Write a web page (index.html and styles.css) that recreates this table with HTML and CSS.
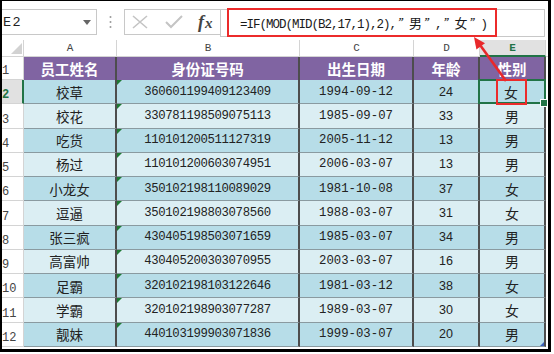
FILE: index.html
```html
<!DOCTYPE html>
<html lang="zh">
<head>
<meta charset="utf-8">
<link rel="stylesheet" href="styles.css">
</head>
<body>
<div class="frame">
  <div class="fbar">
    <div class="namebox"><span class="nm">E2</span><svg class="dd" width="8" height="5" viewBox="0 0 8 5"><path d="M0 0H8L4 5Z" fill="#666"/></svg></div>
    <div class="dots"><svg width="3" height="14" viewBox="0 0 3 14"><circle cx="1.5" cy="2" r="1" fill="#999"/><circle cx="1.5" cy="7" r="1" fill="#999"/><circle cx="1.5" cy="12" r="1" fill="#999"/></svg></div>
    <div class="btns">
      <svg class="xbtn" width="16" height="14" viewBox="0 0 16 14"><path d="M1 1L15 13M15 1L1 13" stroke="#c4c4c4" stroke-width="1.6" fill="none"/></svg>
      <svg class="ckbtn" width="18" height="14" viewBox="0 0 18 14"><path d="M1 7L6 12L17 1" stroke="#c4c4c4" stroke-width="2" fill="none"/></svg>
      <span class="fx"><i>f</i><i class="x">x</i></span>
    </div>
    <div class="input">
      <div class="redf"><span class="ftext">=IF(MOD(MID(B2,17,1),2),<span class="q">”</span><span class="cj">男</span><span class="q">”</span>,<span class="q">”</span><span class="cj">女</span><span class="q">”</span>)</span></div>
    </div>
  </div>
  <div class="sheet">
    <div class="corner"><svg width="11" height="11" viewBox="0 0 11 11"><path d="M11 0V11H0Z" fill="#d2d2d2"/></svg></div>
    <div class="ch">A</div><div class="ch">B</div><div class="ch">C</div><div class="ch">D</div><div class="ch selc">E</div><div class="ch f"></div>

    <div class="rh">1</div>
    <div class="c h">员工姓名</div><div class="c h">身份证号码</div><div class="c h">出生日期</div><div class="c h">年龄</div><div class="c h">性别</div><div class="c f"></div>

    <div class="rh selr">2</div>
    <div class="c d nm2">校草</div><div class="c d id">360601199409123409</div><div class="c d dt">1994-09-12</div><div class="c d ag">24</div><div class="c d sx sel"><span class="redbox">女</span></div><div class="c f"></div>

    <div class="rh">3</div>
    <div class="c l nm2">校花</div><div class="c l id">330781198509075113</div><div class="c l dt">1985-09-07</div><div class="c l ag">33</div><div class="c l sx">男</div><div class="c f"></div>

    <div class="rh">4</div>
    <div class="c d nm2">吃货</div><div class="c d id">110101200511127319</div><div class="c d dt">2005-11-12</div><div class="c d ag">13</div><div class="c d sx">男</div><div class="c f"></div>

    <div class="rh">5</div>
    <div class="c l nm2">杨过</div><div class="c l id">110101200603074951</div><div class="c l dt">2006-03-07</div><div class="c l ag">13</div><div class="c l sx">男</div><div class="c f"></div>

    <div class="rh">6</div>
    <div class="c d nm2">小龙女</div><div class="c d id">350102198110089029</div><div class="c d dt">1981-10-08</div><div class="c d ag">37</div><div class="c d sx">女</div><div class="c f"></div>

    <div class="rh">7</div>
    <div class="c l nm2">逗逼</div><div class="c l id">350102198803078560</div><div class="c l dt">1988-03-07</div><div class="c l ag">31</div><div class="c l sx">女</div><div class="c f"></div>

    <div class="rh">8</div>
    <div class="c d nm2">张三疯</div><div class="c d id">430405198503071659</div><div class="c d dt">1985-03-07</div><div class="c d ag">34</div><div class="c d sx">男</div><div class="c f"></div>

    <div class="rh">9</div>
    <div class="c l nm2">高富帅</div><div class="c l id">430405200303070955</div><div class="c l dt">2003-03-07</div><div class="c l ag">16</div><div class="c l sx">男</div><div class="c f"></div>

    <div class="rh">10</div>
    <div class="c d nm2">足霸</div><div class="c d id">320102198103122646</div><div class="c d dt">1981-03-12</div><div class="c d ag">38</div><div class="c d sx">女</div><div class="c f"></div>

    <div class="rh">11</div>
    <div class="c l nm2">学霸</div><div class="c l id">320102198903077287</div><div class="c l dt">1989-03-07</div><div class="c l ag">30</div><div class="c l sx">女</div><div class="c f"></div>

    <div class="rh">12</div>
    <div class="c d nm2">靓妹</div><div class="c d id">440103199903071836</div><div class="c d dt">1999-03-07</div><div class="c d ag">20</div><div class="c d sx last">男</div><div class="c f"></div>
  </div>
</div>
<svg class="arrow" width="554" height="354" viewBox="0 0 554 354">
  <path d="M506 81L480.6 45.8" stroke="#e8282b" stroke-width="2.6" fill="none"/>
  <path d="M474 37L485 43.2L476.4 49.4Z" fill="#e8282b"/>
</svg>
</body>
</html>
```

FILE: styles.css
```css
* { box-sizing: border-box; margin: 0; padding: 0; }
html, body { width: 554px; height: 354px; background: #fff; overflow: hidden; }
body { font-family: "Liberation Sans", sans-serif; color: #222; }

.frame {
  width: 551px;
  height: 352px;
  border-style: solid;
  border-color: #000;
  border-width: 1px 3px 3px 2px;
  overflow: hidden;
}

/* formula bar */
.fbar {
  display: flex;
  align-items: flex-start;
  height: 39px;
  padding-top: 8px;
  padding-right: 3px;
}
.namebox {
  width: 95px;
  height: 26px;
  border: 1px solid #c8c8c8;
  border-left: none;
  display: flex;
  align-items: center;
  justify-content: space-between;
  padding-right: 5px;
}
.nm { font-family: "Liberation Mono", monospace; font-size: 13.5px; letter-spacing: 1.5px; color: #222; padding-left: 1px; }
.dots { width: 27px; height: 26px; display: flex; align-items: center; justify-content: center; }
.btns {
  width: 96px;
  height: 26px;
  border: 1px solid #c8c8c8;
  border-right: none;
  display: flex;
  align-items: center;
  padding-left: 7px;
}
.xbtn { margin-right: 17px; }
.ckbtn { margin-right: 15px; }
.fx { font-family: "Liberation Serif", serif; color: #444; font-size: 18px; font-weight: 700; line-height: 1; }
.fx .x { font-size: 15px; margin-left: 1px; }
.input {
  flex: 1;
  height: 28px;
  border: 1px solid #c8c8c8;
  padding-left: 6px;
}
.redf {
  width: 270px;
  height: 29px;
  margin-top: -2px;
  border: 2px solid #ec2b2b;
  padding-left: 11px;
  display: flex;
  align-items: center;
}
.ftext { font-family: "Liberation Mono", monospace; font-size: 12.5px; letter-spacing: -1px; color: #1a1a1a; white-space: nowrap; }
.q, .cj { display: inline-block; width: 13px; letter-spacing: 0; text-align: center; font-family: "Noto Sans CJK SC", sans-serif; }
.cj { font-size: 13px; }
.q { font-size: 12px; font-style: italic; }

/* sheet */
.sheet {
  display: grid;
  grid-template-columns: 22px 93px 183px 114px 66px 66px 2px;
  grid-template-rows: 17px 23px repeat(11, 24.27px);
}
.corner { border-right: 1px solid #d4d4d4; border-bottom: 1px solid #d4d4d4; display: flex; align-items: flex-end; justify-content: flex-end; padding: 0 1px 2px 0; }
.ch {
  border-right: 1px solid #d4d4d4;
  border-bottom: 1px solid #d4d4d4;
  font-family: "Liberation Mono", monospace;
  font-size: 11px;
  color: #444;
  display: flex;
  align-items: center;
  justify-content: center;
}
.ch.f { border-right: none; }
.selc { background: #e1e1e1; color: #217346; font-weight: 700; border-bottom: 2px solid #217346; }
.rh {
  border-right: 1px solid #d4d4d4;
  border-bottom: 1px solid #d4d4d4;
  font-family: "Liberation Mono", monospace;
  font-size: 12px;
  color: #444;
  display: flex;
  align-items: flex-end;
  padding: 0 0 1px 0;
}
.selr { background: #e1e1e1; color: #217346; font-weight: 700; border-right: 2px solid #217346; }

.c {
  display: flex;
  align-items: center;
  justify-content: center;
  border-right: 2px solid #4d4d4d;
  white-space: nowrap;
  position: relative;
}
.c.f { border-right: none; background: #fff; }
.h { background: #8064a2; color: #fff; font-family: "Noto Sans CJK SC", sans-serif; font-weight: 700; font-size: 14.5px; }
.d { background: #b7dde8; border-bottom: 1px solid #8a9aa0; }
.l { background: #dbeef3; border-bottom: 1px solid #8a9aa0; }
.nm2 { font-family: "Noto Sans CJK SC", sans-serif; font-size: 13.5px; }
.id { font-family: "Liberation Mono", monospace; font-size: 12.3px; letter-spacing: -0.35px; }
.id::before { content: ""; position: absolute; left: 0; top: 0; border-top: 5px solid #1e7a34; border-right: 5px solid transparent; }
.dt { font-family: "Liberation Mono", monospace; font-size: 12.3px; }
.ag { font-family: "Liberation Sans", sans-serif; font-size: 12.5px; }
.sx { font-family: "Noto Sans CJK SC", sans-serif; font-size: 14px; }

.sel::after {
  content: "";
  position: absolute;
  left: -2px; top: -1px; right: -2px; bottom: -1px;
  border: 2px solid #217346;
}
.sel::before {
  content: "";
  position: absolute;
  right: -4px; bottom: -4px;
  width: 6px; height: 6px;
  background: #217346;
  border: 1px solid #fff;
  z-index: 2;
}
.redbox {
  position: relative;
  z-index: 3;
  display: flex;
  align-items: center;
  justify-content: center;
  flex: none;
  width: 31px;
  height: 26px;
  border: 2px solid #ec2b2b;
  margin-left: -2px;
}
.last::after {
  content: "";
  position: absolute;
  right: 0; bottom: 0;
  border-bottom: 4px solid #3b5fb6;
  border-left: 4px solid transparent;
}

.arrow { position: absolute; left: 0; top: 0; pointer-events: none; }
```
